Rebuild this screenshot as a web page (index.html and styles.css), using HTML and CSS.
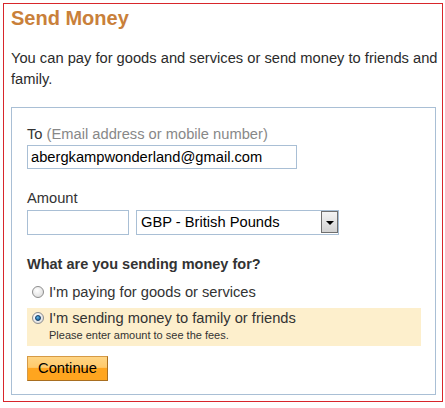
FILE: index.html
```html
<!DOCTYPE html>
<html>
<head>
<meta charset="utf-8">
<link rel="stylesheet" href="styles.css">
</head>
<body>
<div class="panel">
  <h1 class="title">Send Money</h1>
  <p class="intro">You can pay for goods and services or send money to friends and family.</p>
  <div class="formbox">
    <div class="label">To <span class="hint">(Email address or mobile number)</span></div>
    <div class="field email">abergkampwonderland@gmail.com</div>
    <div class="label amount-label">Amount</div>
    <div class="amount-row">
      <div class="field amount"></div>
      <div class="select">
        <span class="select-text">GBP - British Pounds</span>
        <span class="select-btn"><span class="arrow"></span></span>
      </div>
    </div>
    <div class="question">What are you sending money for?</div>
    <div class="option">
      <span class="radio"></span>
      <span class="opt-text">I'm paying for goods or services</span>
    </div>
    <div class="option selected">
      <span class="radio checked"></span>
      <div class="opt-body">
        <div class="opt-text">I'm sending money to family or friends</div>
        <div class="note">Please enter amount to see the fees.</div>
      </div>
    </div>
    <div class="btn">Continue</div>
  </div>
</div>
</body>
</html>
```
FILE: styles.css
```css
html, body {
  margin: 0;
  padding: 0;
  background: #fff;
}
body {
  font-family: "Liberation Sans", Arial, sans-serif;
  color: #333;
}
.panel {
  margin: 3px;
  width: 425px;
  border: 1px solid #d8262b;
  padding: 3px 6px 6px 7px;
}
.title {
  margin: 0;
  font-size: 20px;
  line-height: 23px;
  height: 23px;
  font-weight: bold;
  color: #c9803a;
}
.intro {
  margin: 18px 0 0 0;
  font-size: 14.7px;
  line-height: 21px;
  width: 430px;
  color: #2b2b2b;
}
.formbox {
  margin-top: 17px;
  border: 1px solid #a9bfd5;
  padding: 17px 13px 13px 15px;
}
.label {
  font-size: 14.7px;
  line-height: 18px;
  color: #333;
}
.hint {
  color: #888;
}
.field {
  box-sizing: border-box;
  border: 1px solid #a9bfd5;
  height: 24px;
  font-size: 14.7px;
  line-height: 22px;
  padding-left: 3px;
  color: #000;
}
.email {
  margin-top: 2px;
  width: 270px;
}
.amount-label {
  margin-top: 20px;
}
.amount-row {
  display: flex;
  gap: 7px;
  margin-top: 3px;
}
.amount {
  width: 102px;
  height: 25px;
}
.select {
  box-sizing: border-box;
  width: 203px;
  height: 25px;
  border: 1px solid #a9bfd5;
  display: flex;
  align-items: stretch;
  justify-content: space-between;
}
.select-text {
  font-size: 14.7px;
  line-height: 23px;
  padding-left: 4px;
  color: #000;
}
.select-btn {
  box-sizing: border-box;
  width: 17px;
  margin: 0 0 1px 0;
  border: 1px solid #6f6f6f;
  background: linear-gradient(#f4f4f4, #d2d2d2);
  display: flex;
  align-items: center;
  justify-content: center;
}
.arrow {
  width: 0;
  height: 0;
  border-left: 4px solid transparent;
  border-right: 4px solid transparent;
  border-top: 4px solid #000;
  margin-top: 1px;
}
.question {
  margin-top: 20px;
  font-size: 14.5px;
  line-height: 18px;
  font-weight: bold;
  color: #333;
}
.option {
  display: flex;
  align-items: flex-start;
  padding-left: 5px;
  margin-top: 10px;
  width: 389px;
}
.option.selected {
  margin-top: 7px;
  background: #fdefcc;
  padding-top: 1px;
  padding-bottom: 4px;
}
.opt-text {
  font-size: 14.7px;
  line-height: 18px;
  color: #333;
}
.radio {
  box-sizing: border-box;
  width: 12px;
  height: 12px;
  border-radius: 50%;
  border: 1px solid #8d8d8d;
  background: radial-gradient(circle at 40% 35%, #ffffff, #d6d6d6);
  margin-top: 3px;
  margin-right: 5px;
  flex: none;
  display: flex;
  align-items: center;
  justify-content: center;
}
.radio.checked::after {
  content: "";
  width: 6px;
  height: 6px;
  border-radius: 50%;
  background: radial-gradient(circle at 40% 35%, #5fb6ea, #0d4f8a);
  border: 0.5px solid #123c66;
  box-sizing: border-box;
}
.note {
  font-size: 11px;
  line-height: 14px;
  margin-top: 1px;
  color: #333;
}
.btn {
  box-sizing: border-box;
  margin-top: 10px;
  width: 81px;
  height: 25px;
  border: 1px solid #d69a45;
  border-right-color: #a86e20;
  border-bottom-color: #a86e20;
  background: linear-gradient(#ffd584 0%, #ffca6c 45%, #ffa51f 50%, #ffa51f 100%);
  font-size: 14.7px;
  line-height: 23px;
  text-align: center;
  color: #000;
}
```
